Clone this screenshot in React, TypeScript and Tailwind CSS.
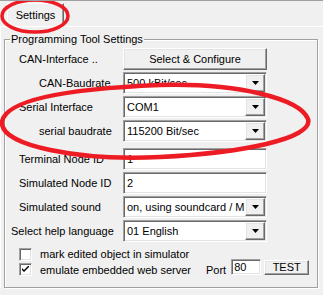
const sunken =
  'bg-white border border-t-[#a0a0a0] border-l-[#a0a0a0] border-r-white border-b-white shadow-[inset_1px_1px_0_#696969,inset_-1px_-1px_0_#e3e3e3]'
const raised =
  'bg-[#f0f0f0] border border-t-white border-l-white border-r-[#696969] border-b-[#696969] shadow-[inset_-1px_-1px_0_#a0a0a0,inset_1px_1px_0_#e3e3e3]'

function Arrow() {
  return (
    <svg width="7" height="4" viewBox="0 0 7 4">
      <polygon points="0,0 7,0 3.5,4" fill="#000" />
    </svg>
  )
}

function Select({ value }: { value: string }) {
  return (
    <div className={`flex h-[22px] w-[144px] p-[1px] ${sunken}`}>
      <div className="flex-1 overflow-hidden whitespace-nowrap pl-[2px] leading-[18px]">{value}</div>
      <div className={`flex h-[18px] w-[20px] shrink-0 items-center justify-center ${raised}`}>
        <Arrow />
      </div>
    </div>
  )
}

function TextBox({ value }: { value: string }) {
  return (
    <div className={`h-[22px] w-[144px] pl-[3px] leading-[20px] ${sunken}`}>{value}</div>
  )
}

function Row({ label, pad, mt, children }: { label: string; pad: string; mt: string; children: React.ReactNode }) {
  return (
    <div className={`flex h-[22px] items-center ${mt}`}>
      <div className={`w-[118px] shrink-0 whitespace-nowrap ${pad}`}>{label}</div>
      {children}
    </div>
  )
}

function CheckBox({ checked }: { checked: boolean }) {
  return (
    <div className={`flex h-[13px] w-[13px] shrink-0 items-center justify-center ${sunken}`}>
      {checked && (
        <svg width="7" height="7" viewBox="0 0 7 7">
          <path d="M0 2 L0 4 L2 6 L7 1 L7 -1 L2 4 Z" fill="#000" />
        </svg>
      )}
    </div>
  )
}

export default function App() {
  return (
    <div className="relative h-[295px] w-[323px] overflow-hidden border-t border-[#a0a0a0] bg-[#f0f0f0] font-['Liberation_Sans',Arial,sans-serif] text-[11px] leading-[13px] text-black">
      {/* Tab strip */}
      <div className="flex h-[25px] items-end">
        <div className="ml-[7px] flex h-[23px] w-[57px] items-center justify-center border-l border-t border-r border-l-white border-t-white border-r-[#696969] shadow-[inset_-1px_0_0_#a0a0a0]">
          Settings
        </div>
      </div>

      {/* Tab panel */}
      <div className="border-t border-l border-t-white border-l-white">
        <div className="relative ml-[3px] mt-[12px] h-[249px] w-[314px] border border-[#a0a0a0] px-0 pt-[8px] shadow-[inset_1px_1px_0_#fff,1px_1px_0_#fff]">
          <div className="absolute left-[5px] top-[-7px] bg-[#f0f0f0] px-[1px]">Programming Tool Settings</div>

          <Row label="CAN-Interface .." pad="pl-[14px]" mt="">
            <button className={`h-[22px] w-[144px] ${raised}`}>Select &amp; Configure</button>
          </Row>
          <Row label="CAN-Baudrate" pad="pl-[34px]" mt="mt-[2px]">
            <Select value="500 kBit/sec" />
          </Row>
          <Row label="Serial Interface" pad="pl-[14px]" mt="mt-[2px]">
            <Select value="COM1" />
          </Row>
          <Row label="serial baudrate" pad="pl-[34px]" mt="mt-[2px]">
            <Select value="115200 Bit/sec" />
          </Row>
          <Row label="Terminal Node ID" pad="pl-[14px]" mt="mt-[6px]">
            <TextBox value="1" />
          </Row>
          <Row label="Simulated Node ID" pad="pl-[14px]" mt="mt-[2px]">
            <TextBox value="2" />
          </Row>
          <Row label="Simulated sound" pad="pl-[14px]" mt="mt-[2px]">
            <Select value="on, using soundcard / MIDI" />
          </Row>
          <Row label="Select help language" pad="pl-[6px]" mt="mt-[2px]">
            <Select value="01 English" />
          </Row>

          {/* Checkboxes */}
          <div className="mt-[6px] flex h-[13px] items-center pl-[14px]">
            <CheckBox checked={false} />
            <span className="ml-[8px] whitespace-nowrap">mark edited object in simulator</span>
          </div>
          <div className="flex items-start pl-[14px]">
            <div className="mt-[2px]">
              <CheckBox checked={true} />
            </div>
            <span className="ml-[8px] mt-[3px] w-[166px] whitespace-nowrap">emulate embedded web server</span>
            <span className="mt-[3px] whitespace-nowrap">Port</span>
            <div className={`-mt-[2px] ml-[5px] h-[16px] w-[30px] pl-[2px] leading-[14px] ${sunken}`}>80</div>
            <button className={`-mt-[1px] ml-[3px] h-[15px] w-[45px] leading-[13px] ${raised}`}>TEST</button>
          </div>
        </div>
      </div>

      {/* Red annotation marks */}
      <svg className="pointer-events-none absolute left-0 top-0" width="323" height="295" viewBox="0 0 323 295">
        <ellipse cx="35" cy="15" rx="33" ry="16" fill="none" stroke="#ed1c24" strokeWidth="3.5" />
        <path
          d="M 2 121 C 5 100, 60 88, 160 84 C 240 82, 300 98, 308 118 C 314 138, 240 152, 160 156 C 80 160, 0 145, 2 121 Z"
          fill="none"
          stroke="#ed1c24"
          strokeWidth="4.5"
        />
      </svg>
    </div>
  )
}
